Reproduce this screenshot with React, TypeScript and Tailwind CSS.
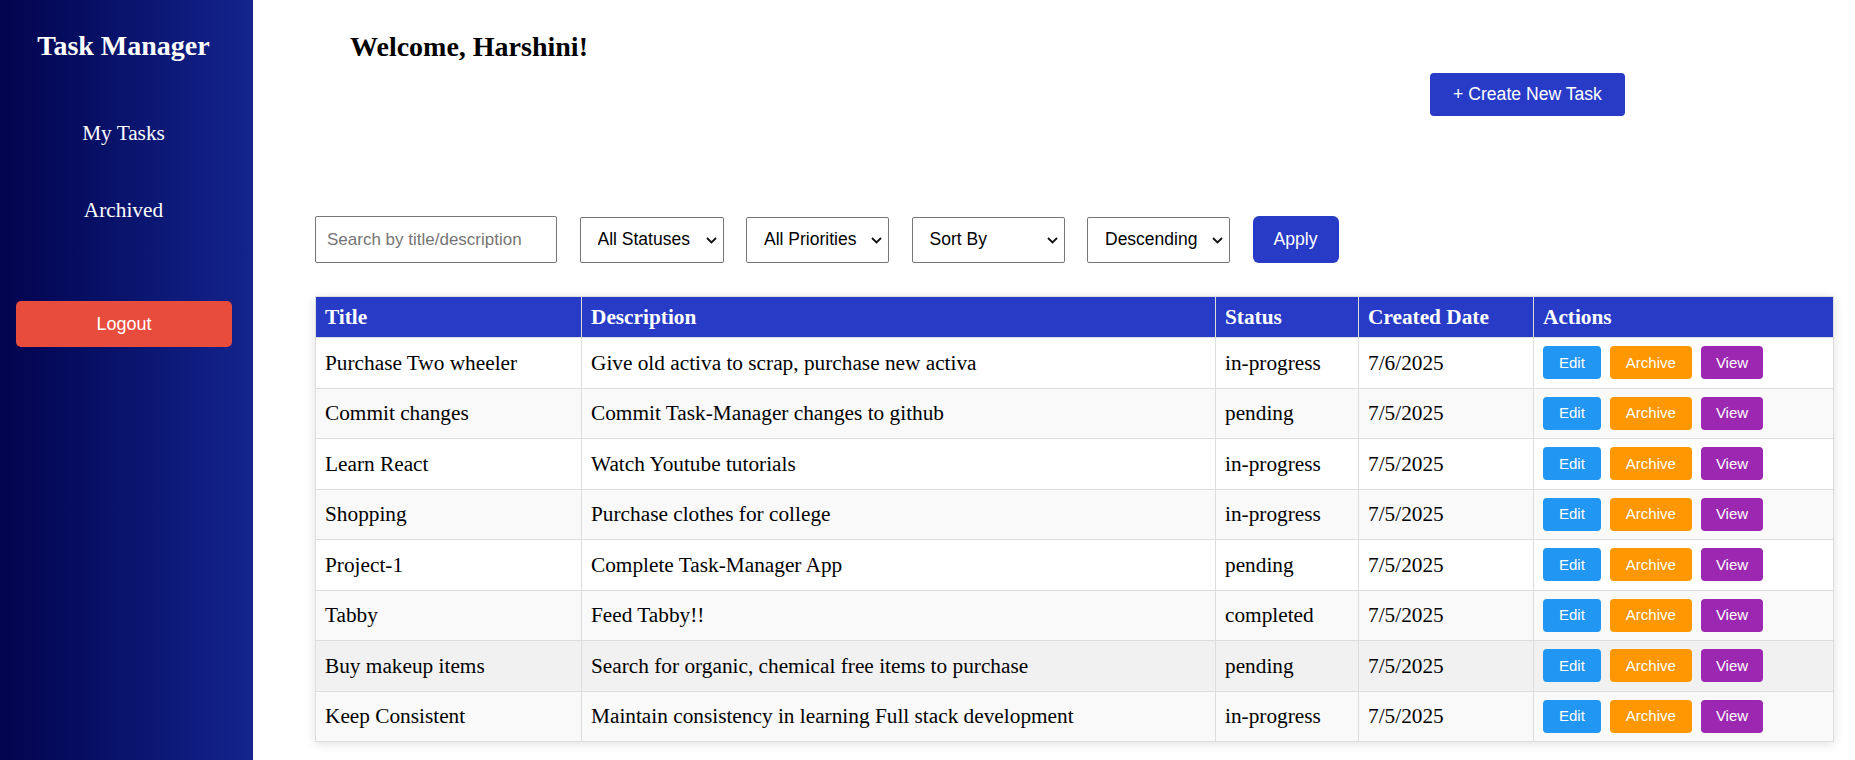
import React from "react";

type Task = {
  title: string;
  description: string;
  status: string;
  created: string;
};

const tasks: Task[] = [
  { title: "Purchase Two wheeler", description: "Give old activa to scrap, purchase new activa", status: "in-progress", created: "7/6/2025" },
  { title: "Commit changes", description: "Commit Task-Manager changes to github", status: "pending", created: "7/5/2025" },
  { title: "Learn React", description: "Watch Youtube tutorials", status: "in-progress", created: "7/5/2025" },
  { title: "Shopping", description: "Purchase clothes for college", status: "in-progress", created: "7/5/2025" },
  { title: "Project-1", description: "Complete Task-Manager App", status: "pending", created: "7/5/2025" },
  { title: "Tabby", description: "Feed Tabby!!", status: "completed", created: "7/5/2025" },
  { title: "Buy makeup items", description: "Search for organic, chemical free items to purchase", status: "pending", created: "7/5/2025" },
  { title: "Keep Consistent", description: "Maintain consistency in learning Full stack development", status: "in-progress", created: "7/5/2025" },
];

function Select({ label, width }: { label: string; width: string }) {
  return (
    <div className={`relative h-[46px] ${width}`}>
      <select className="h-full w-full appearance-none rounded-[2px] border border-[#767676] bg-white pl-[17px] pr-6 text-[17.5px] text-black">
        <option>{label}</option>
      </select>
      {/* chevron */}
      <svg
        className="pointer-events-none absolute right-[7px] top-[20px]"
        width="11"
        height="7"
        viewBox="0 0 11 7"
        fill="none"
      >
        <path d="M1 1l4.5 4.5L10 1" stroke="#111" strokeWidth="1.8" />
      </svg>
    </div>
  );
}

export default function App() {
  return (
    <div className="flex min-h-[760px] w-full bg-white font-['Liberation_Serif',serif]">
      {/* Sidebar */}
      <aside className="flex w-[253px] shrink-0 flex-col items-center bg-gradient-to-r from-[#03044d] to-[#14248e] pr-[6px] text-white">
        <h2 className="mt-[30px] text-[28px] font-bold leading-[32px]">Task Manager</h2>
        <nav className="flex flex-col items-center text-[21.3px] leading-[24px]">
          <a className="mt-[59px] cursor-pointer">My Tasks</a>
          <a className="mt-[53px] cursor-pointer">Archived</a>
        </nav>
        <button className="ml-[16px] mt-[79px] h-[46px] w-[216px] self-start rounded-[5px] bg-[#e74c3c] font-['Liberation_Sans',sans-serif] text-[18px] text-white">
          Logout
        </button>
      </aside>

      {/* Main */}
      <main className="flex-1">
        <div className="flex items-start justify-between pl-[97px] pr-[230px]">
          <h2 className="mt-[31px] text-[28px] font-bold leading-[32px] text-black">Welcome, Harshini!</h2>
          <button className="mt-[73px] h-[43px] w-[195px] rounded-[4px] bg-[#273bc7] font-['Liberation_Sans',sans-serif] text-[17.6px] text-white">
            + Create New Task
          </button>
        </div>

        {/* Filters */}
        <div className="ml-[62px] mt-[100px] flex items-center gap-[22.5px] font-['Liberation_Sans',sans-serif]">
          <input
            className="h-[47px] w-[242px] rounded-[2px] border border-[#767676] px-[11px] text-[17px] text-black placeholder:text-[#757575]"
            placeholder="Search by title/description"
          />
          <Select label="All Statuses" width="w-[144px]" />
          <Select label="All Priorities" width="w-[143px]" />
          <Select label="Sort By" width="w-[153px]" />
          <Select label="Descending" width="w-[143px]" />
          <button className="h-[47px] w-[86px] rounded-[6px] bg-[#273bc7] text-[17.6px] text-white">Apply</button>
        </div>

        {/* Table */}
        <table className="ml-[62px] mt-[33px] w-[1518px] table-fixed border-collapse text-[21.3px] leading-[24px] text-black shadow-[0_2px_10px_rgba(0,0,0,0.12)]">
          <colgroup>
            <col className="w-[266px]" />
            <col className="w-[634px]" />
            <col className="w-[143px]" />
            <col className="w-[175px]" />
            <col className="w-[300px]" />
          </colgroup>
          <thead>
            <tr className="bg-[#273bc7] text-white">
              {["Title", "Description", "Status", "Created Date", "Actions"].map((h) => (
                <th key={h} className="h-[41px] border border-[#dddddd] px-[9px] text-left font-bold">
                  {h}
                </th>
              ))}
            </tr>
          </thead>
          <tbody>
            {tasks.map((t, i) => (
              <tr
                key={t.title}
                className={i === 6 ? "bg-[#f1f1f1]" : i % 2 === 1 ? "bg-[#f9f9f9]" : "bg-white"}
              >
                <td className="h-[50.5px] border border-[#dddddd] px-[9px]">{t.title}</td>
                <td className="border border-[#dddddd] px-[9px]">{t.description}</td>
                <td className="border border-[#dddddd] px-[9px]">{t.status}</td>
                <td className="border border-[#dddddd] px-[9px]">{t.created}</td>
                <td className="border border-[#dddddd] px-[9px]">
                  <div className="flex gap-[9px] font-['Liberation_Sans',sans-serif] text-[15px] text-white">
                    <button className="h-[33px] rounded-[4px] bg-[#2196f3] px-4">Edit</button>
                    <button className="h-[33px] rounded-[4px] bg-[#ff9800] px-4">Archive</button>
                    <button className="h-[33px] rounded-[4px] bg-[#9c27b0] px-[15px]">View</button>
                  </div>
                </td>
              </tr>
            ))}
          </tbody>
        </table>
      </main>
    </div>
  );
}
